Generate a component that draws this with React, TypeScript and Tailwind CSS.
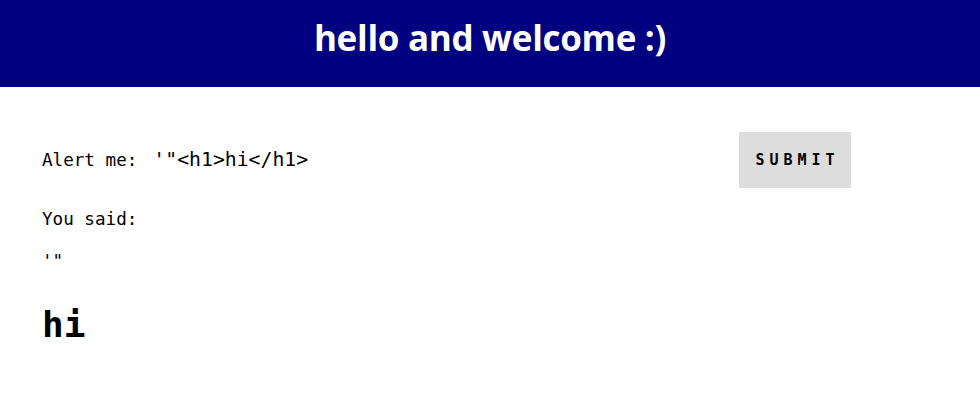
import { useState } from "react";

const mono = "font-['DejaVu_Sans_Mono','Liberation_Mono',monospace]";

export default function App() {
  const [value, setValue] = useState(`'"<h1>hi</h1>`);

  return (
    <div className="min-h-[408px] bg-white">
      {/* Header */}
      <header className="flex h-[87px] justify-center bg-[#000080] pt-[16px]">
        <h1 className="font-['Open_Sans',sans-serif] text-[35px] font-bold leading-[44px] tracking-[-0.3px] text-white">
          hello and welcome :)
        </h1>
      </header>

      <main className={`${mono} px-[42px] pt-[45px] text-black`}>
        {/* Form row */}
        <form
          className="flex w-[809px] items-center justify-between"
          onSubmit={(e) => e.preventDefault()}
        >
          <label className="flex items-center text-[17.6px]">
            Alert me:
            <input
              value={value}
              onChange={(e) => setValue(e.target.value)}
              className={`${mono} ml-[16px] w-[300px] border-none bg-transparent text-[19.8px] outline-none`}
            />
          </label>
          <button
            type="submit"
            className="flex h-[56px] w-[112px] items-center justify-center bg-[#dddddd] pl-[5px] text-[15px] font-bold tracking-[5px]"
          >
            SUBMIT
          </button>
        </form>

        {/* Output */}
        <p className="mt-[19px] text-[17.6px] leading-[24px]">You said:</p>
        <p className="mt-[18px] text-[17.6px] leading-[24px]">'"</p>
        <h2 className="mt-[30px] text-[36px] font-bold leading-[44px]">hi</h2>
      </main>
    </div>
  );
}
